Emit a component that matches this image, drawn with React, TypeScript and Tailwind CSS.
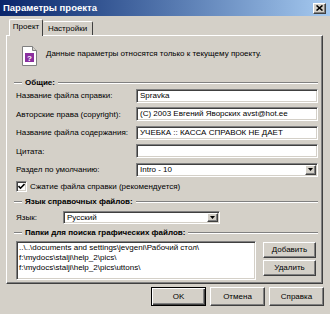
import type { ReactNode } from "react";

const raised =
  "border border-t-white border-l-white border-r-[#404040] border-b-[#404040] shadow-[inset_-1px_-1px_0_#808080]";
const sunken =
  "border border-t-[#808080] border-l-[#808080] border-r-white border-b-white shadow-[inset_1px_1px_0_#404040,inset_-1px_-1px_0_#d4d0c8]";

function GroupHeader({ children }: { children: ReactNode }) {
  return (
    <div className="flex items-center h-[11px] -ml-[2px]">
      <div className="w-[8px] border-t border-b border-t-[#808080] border-b-white" />
      <span className="px-[3px] font-bold leading-[11px] whitespace-nowrap">{children}</span>
      <div className="flex-1 border-t border-b border-t-[#808080] border-b-white" />
    </div>
  );
}

function DropArrow() {
  return (
    <div className={`w-[11px] h-full bg-[#d4d0c8] flex items-center justify-center ${raised}`}>
      <svg width="5" height="3" viewBox="0 0 5 3">
        <path d="M0 0h5L2.5 3z" fill="#000" />
      </svg>
    </div>
  );
}

function Field({ label, value, select }: { label: string; value: string; select?: boolean }) {
  return (
    <div className="flex items-center h-[14px]">
      <span className="w-[120px] leading-[11px] whitespace-nowrap">{label}</span>
      <div className={`w-[182px] h-[14px] bg-white flex items-stretch ${sunken}`}>
        <span className="flex-1 pl-[3px] leading-[12px] whitespace-nowrap overflow-hidden">{value}</span>
        {select && (
          <div className="p-[1px]">
            <DropArrow />
          </div>
        )}
      </div>
    </div>
  );
}

function Button({ children, isDefault }: { children: ReactNode; isDefault?: boolean }) {
  return (
    <div
      className={
        isDefault
          ? "w-[55px] h-[19px] flex items-center justify-center border border-black shadow-[inset_1px_1px_0_white,inset_-1px_-1px_0_#404040,inset_-2px_-2px_0_#808080]"
          : `w-[55px] h-[19px] flex items-center justify-center ${raised}`
      }
    >
      {children}
    </div>
  );
}

function InfoIcon() {
  return (
    <svg width="15" height="20" viewBox="0 0 15 20">
      <path d="M0.5 0.5h10l4 4v15h-14z" fill="#fff" stroke="#808080" />
      <path d="M10.5 0.5v4h4" fill="#d4d0c8" stroke="#808080" />
      <rect x="3" y="7" width="9" height="9" fill="#8b2f9f" />
      <text x="7.5" y="14.5" textAnchor="middle" fontSize="8" fontWeight="bold" fill="#fff" fontFamily="Liberation Sans, Arial, sans-serif">
        ?
      </text>
    </svg>
  );
}

export default function App() {
  return (
    <div className="w-[330px] h-[314px] bg-[#d4d0c8] overflow-hidden text-[8px] text-black font-['Liberation_Sans',Arial,sans-serif] select-none">
      {/* Title bar */}
      <div className="h-[16px] flex items-center pl-[3px] pr-[4px] bg-gradient-to-r from-[#0a246a] to-[#a6caf0]">
        <span className="flex-1 text-white font-bold text-[9.5px] leading-[12px]">Параметры проекта</span>
        <div className={`w-[13px] h-[11px] bg-[#d4d0c8] flex items-center justify-center ${raised}`}>
          <svg width="7" height="6" viewBox="0 0 7 6">
            <path d="M0.5 0.5l6 5M6.5 0.5l-6 5" stroke="#000" strokeWidth="1.6" />
          </svg>
        </div>
      </div>

      <div className="px-[6px] pt-[3px]">
        {/* Tabs */}
        <div className="flex items-end h-[16px] pl-[3px] relative z-10">
          <div className="h-[17px] w-[34px] -mb-px bg-[#d4d0c8] border-t border-l border-r border-t-white border-l-white border-r-[#404040] rounded-t-[2px] flex items-center justify-center pb-[2px]">
            Проект
          </div>
          <div className="h-[14px] w-[50px] border-t border-r border-t-white border-r-[#404040] rounded-t-[2px] flex items-center justify-center">
            Настройки
          </div>
        </div>

        {/* Tab panel */}
        <div className={`h-[249px] w-[317px] pl-[9px] pr-[4px] ${raised}`}>
          <div className="flex items-start mt-[10px] ml-[6px]">
            <InfoIcon />
            <span className="ml-[9px] mt-[2px] leading-[11px] whitespace-nowrap">
              Данные параметры относятся только к текущему проекту.
            </span>
          </div>

          <div className="mt-[11px]">
            <GroupHeader>Общие:</GroupHeader>
          </div>
          <div className="flex flex-col gap-[4.5px] mt-[0.5px]">
            <Field label="Название файла справки:" value="Spravka" />
            <Field label="Авторские права (copyright):" value="(C) 2003 Евгений Яворских avst@hot.ee" />
            <Field label="Название файла содержания:" value="УЧЕБКА :: КАССА СПРАВОК НЕ ДАЕТ" />
            <Field label="Цитата:" value="" />
            <Field label="Раздел по умолчанию:" value="Intro - 10" select />
          </div>

          <div className="flex items-center mt-[4px] h-[11px]">
            <div className={`w-[11px] h-[11px] bg-white flex items-center justify-center ${sunken}`}>
              <svg width="7" height="7" viewBox="0 0 7 7">
                <path d="M0.5 3l2 2.2L6.5 1" fill="none" stroke="#000" strokeWidth="1.6" />
              </svg>
            </div>
            <span className="ml-[3px] leading-[11px]">Сжатие файла справки (рекомендуется)</span>
          </div>

          <div className="mt-[4.5px]">
            <GroupHeader>Язык справочных файлов:</GroupHeader>
          </div>
          <div className="flex items-center mt-[3.5px] h-[13px]">
            <span className="w-[47px] leading-[11px]">Язык:</span>
            <div className={`w-[157px] h-[13px] bg-white flex items-stretch ${sunken}`}>
              <span className="flex-1 pl-[3px] leading-[11px]">Русский</span>
              <div className="p-[1px]">
                <DropArrow />
              </div>
            </div>
          </div>

          <div className="mt-[3.5px]">
            <GroupHeader>Папки для поиска графических файлов:</GroupHeader>
          </div>
          <div className="flex mt-[2.5px]">
            <div className={`w-[240px] h-[39px] bg-white pl-[2px] pt-[1px] flex flex-col leading-[10px] ${sunken}`}>
              <span className="whitespace-nowrap overflow-hidden">..\..\documents and settings\jevgeni\Рабочий стол\</span>
              <span>f:\mydocs\stalji\help_2\pics\</span>
              <span>f:\mydocs\stalji\help_2\pics\uttons\</span>
            </div>
            <div className="ml-[7px] flex flex-col gap-[2px] pt-[1px]">
              <div className={`w-[53px] h-[16px] flex items-center justify-center ${raised}`}>Добавить</div>
              <div className={`w-[53px] h-[16px] flex items-center justify-center ${raised}`}>Удалить</div>
            </div>
          </div>
        </div>

        {/* Dialog buttons */}
        <div className="flex justify-end gap-[4px] mt-[3px]">
          <Button isDefault>OK</Button>
          <Button>Отмена</Button>
          <Button>Справка</Button>
        </div>
      </div>
    </div>
  );
}
